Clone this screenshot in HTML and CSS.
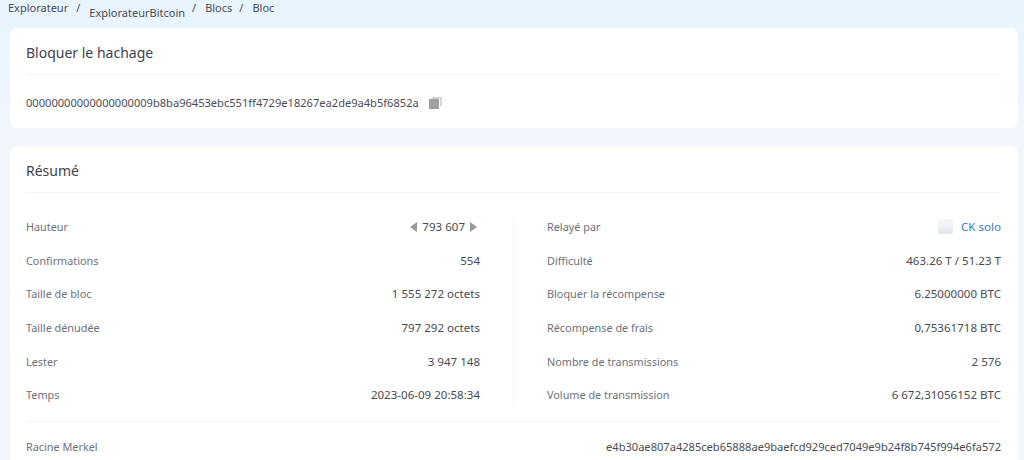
FILE: index.html
```html
<!DOCTYPE html>
<html lang="fr">
<head>
<meta charset="utf-8">
<title>Bloc</title>
<link rel="stylesheet" href="styles.css">
</head>
<body>
<nav class="crumbs">
  <span>Explorateur</span><i class="first">/</i>
  <span class="low">ExplorateurBitcoin</span><i>/</i>
  <span>Blocs</span><i>/</i>
  <span>Bloc</span>
</nav>
<section class="card hash-card">
  <h2>Bloquer le hachage</h2>
  <div class="hash">
    <span>00000000000000000009b8ba96453ebc551ff4729e18267ea2de9a4b5f6852a</span>
    <svg class="copy" width="13" height="12" viewBox="0 0 13 12"><path fill="#d6d6d6" d="M3 0h10v9h-2V2H3z"/><rect y="2" width="10" height="10" fill="#a0a0a0"/></svg>
  </div>
</section>
<section class="card summary">
  <h2>Résumé</h2>
  <div class="cols">
    <div class="col left">
      <div class="row"><span class="k">Hauteur</span><span class="v nav"><b class="tri l"></b>793 607<b class="tri r"></b></span></div>
      <div class="row"><span class="k">Confirmations</span><span class="v">554</span></div>
      <div class="row"><span class="k">Taille de bloc</span><span class="v">1 555 272 octets</span></div>
      <div class="row"><span class="k">Taille dénudée</span><span class="v">797 292 octets</span></div>
      <div class="row"><span class="k">Lester</span><span class="v">3 947 148</span></div>
      <div class="row"><span class="k">Temps</span><span class="v">2023-06-09 20:58:34</span></div>
    </div>
    <div class="col right">
      <div class="row"><span class="k">Relayé par</span><span class="v pool"><b class="logo"></b><a>CK solo</a></span></div>
      <div class="row"><span class="k">Difficulté</span><span class="v">463.26 T / 51.23 T</span></div>
      <div class="row"><span class="k">Bloquer la récompense</span><span class="v">6.25000000 BTC</span></div>
      <div class="row"><span class="k">Récompense de frais</span><span class="v">0,75361718 BTC</span></div>
      <div class="row"><span class="k">Nombre de transmissions</span><span class="v">2 576</span></div>
      <div class="row"><span class="k">Volume de transmission</span><span class="v">6 672,31056152 BTC</span></div>
    </div>
  </div>
  <div class="row merkel"><span class="k">Racine Merkel</span><span class="v mono">e4b30ae807a4285ceb65888ae9baefcd929ced7049e9b24f8b745f994e6fa572</span></div>
</section>
</body>
</html>
```
FILE: styles.css
```css
* { box-sizing: border-box; }
body {
  margin: 0;
  padding: 0 6px 0 10px;
  height: 460px;
  overflow: hidden;
  background: linear-gradient(#e8f4fe 0, #f2f6fc 140px, #f3f6fb 100%);
  font-family: "Noto Sans", sans-serif;
  font-size: 11px;
  color: #4a4a55;
}
.crumbs {
  display: flex;
  align-items: flex-start;
  height: 28px;
  margin-left: -2px;
  line-height: 15px;
}
.crumbs i { font-style: normal; margin: 0 9px 0 7px; }
.crumbs i.first { margin: 0 9px 0 8px; }
.crumbs .low { margin-top: 5px; }
.card {
  background: #fff;
  border-radius: 8px;
  padding: 0 17px 0 16px;
}
.hash-card { height: 100px; margin-bottom: 18px; }
.summary { height: 330px; }
h2 {
  margin: 0;
  height: 47px;
  padding-top: 15px;
  font-size: 14px;
  line-height: 20px;
  font-weight: 400;
  color: #3f4150;
  border-bottom: 1px solid #f1f3f6;
}
.hash {
  display: flex;
  align-items: center;
  gap: 10px;
  margin-top: 20px;
  line-height: 16px;
  font-size: 11.1px;
}
.copy { display: block; }
.cols {
  display: flex;
  margin-top: 17px;
  padding-bottom: 9px;
  border-bottom: 1px solid #f1f3f6;
}
.col { flex: 1 1 0; }
.left { position: relative; padding-right: 34px; }
.left::after {
  content: "";
  position: absolute;
  top: 9px;
  bottom: 7px;
  right: 0;
  width: 1px;
  background: #f1f3f6;
}
.right { padding-left: 33px; }
.row {
  display: flex;
  justify-content: space-between;
  align-items: center;
  height: 33.6px;
}
.k { color: #6d6f7b; font-size: 10.85px; }
.v { color: #4a4a55; font-size: 11.55px; }
.v.mono { font-size: 11.1px; }
.nav { display: flex; align-items: center; gap: 5px; }
.tri { width: 0; height: 0; border-top: 5px solid transparent; border-bottom: 5px solid transparent; }
.tri.l { border-right: 7px solid #9a9a9a; }
.tri.r { border-left: 7px solid #9a9a9a; margin-right: 3px; }
.pool { display: flex; align-items: center; gap: 8px; }
.logo { width: 15px; height: 15px; border-radius: 2px; background: linear-gradient(#f1f3f7 40%, #dde3ec); }
.pool a { color: #3a78b8; }
.merkel { margin-top: 8px; }
```
